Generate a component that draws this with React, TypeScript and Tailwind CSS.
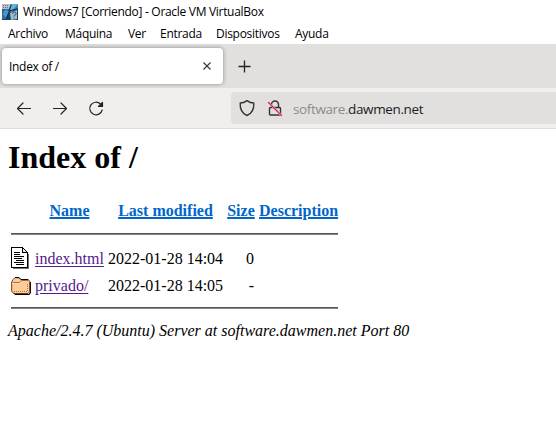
import React from "react";

const ui = "font-['Open_Sans','Noto_Sans',sans-serif]";

function VmIcon() {
  return (
    <svg width="16" height="16" viewBox="0 0 16 16" className="shrink-0">
      <rect width="16" height="16" fill="#17466b" />
      <path d="M1 5h6L4 15H0V8z" fill="#2c6fa5" />
      <path d="M7 1l9-1v4L9 8z" fill="#3680b5" />
      <path d="M10 0h6L9 8l-2-2z" fill="#64b3df" />
      <path d="M3 6l5 1-4 7-3-4z" fill="#4b98ce" />
      <path d="M8 9l7-3v9l-6 1z" fill="#a8bdca" />
      <path d="M0 0h9L7 5H0z" fill="#b9c1c7" />
      <path d="M1 1.5h5M1 3.5h5" stroke="#66727d" strokeDasharray="1 1" />
      <path d="M9 1L7 8l-3 7M7 7l8-2" stroke="#0b2941" fill="none" />
      <path d="M10.5 10q0-2 2-2t1.500 2q0 1-2 1.500v1M11.500 14h1" stroke="#245a8b" fill="none" />
    </svg>
  );
}

function FileIcon() {
  return (
    <svg width="20" height="22" viewBox="0 0 20 22" shapeRendering="crispEdges">
      <path d="M1 21h17V7h-1v14zM0 0h12v1h1v1h1v1h1v1h1v1h1v16H0z" fill="#000" />
      <path d="M17 7h1v15H2v-1h15z" fill="#777" />
      <path d="M1 1h10v5h5v14H1z" fill="#fff" />
      <path d="M12 2h1v1h1v1h1v1h-3z" fill="#eee" />
      <path d="M3 5h6v1H3zM3 7h6v1H3zM3 9h10v1H3zM3 11h8v1H3zM5 13h8v1H5zM3 15h10v1H3zM5 17h8v1H5z" fill="#000" />
    </svg>
  );
}

function FolderIcon() {
  return (
    <svg width="20" height="18" viewBox="0 0 20 18">
      <path d="M2.500 15.500l2 2H18l1.500-2V5" fill="none" stroke="#000" strokeWidth="1.200" />
      <path d="M.7 5l1.500-2.500L4 .7h4l2 2h7.500l1.200 2v10L17 16.500H3L.7 14.500z" fill="#ffcc99" stroke="#6b3c12" strokeWidth="1" />
      <path d="M2 5.500h6.500l2.500-2h6" fill="none" stroke="#9c6332" strokeWidth=".9" />
      <path d="M1.500 6.500h7l2.500-2" fill="none" stroke="#ffe3c5" strokeWidth=".7" />
      <path d="M3 14.500h14M16.500 7v8" fill="none" stroke="#ab7544" strokeDasharray="1 1" shapeRendering="crispEdges" />
      <path d="M4 .5h4l2 2h7" fill="none" stroke="#000" />
    </svg>
  );
}

function Toolbar() {
  return (
    <div className="flex h-[41px] items-center border-b border-[#dededd] bg-[#f0efee]">
      <svg width="231" height="40" viewBox="0 0 231 40" fill="none" stroke="#242424" strokeWidth="1.2" strokeLinecap="round" strokeLinejoin="round">
        <path d="M30.500 20.500H17.500M23 15l-5.500 5.500L23 26" />
        <path d="M53.500 20.500h13M61 15l5.500 5.500L61 26" />
        <path d="M100.500 16A6.300 6.300 0 1 0 102.200 22" />
        <path d="M102.500 14.500v4h-4z" fill="#242424" />
      </svg>
      <div className="flex h-8 flex-1 items-center rounded-l-[4px] bg-[#e1e0df]">
        <svg width="62" height="32" viewBox="0 0 62 32" fill="none" stroke="#343434" strokeWidth="1.4" strokeLinecap="round" strokeLinejoin="round">
          <path d="M16 8.600q3.200 2.400 6.800 2.400c.3 6-1.800 10.500-6.800 12.500-5-2-7.100-6.500-6.800-12.500q3.600 0 6.800-2.400z" />
          <path d="M40.500 15v-2.500a3.500 3.500 0 0 1 7 0V15M39.500 15.500h9q1 0 1 1v5.500q0 1-1 1h-9q-1 0-1-1v-5.500q0-1 1-1z" />
          <path d="M38 11l13 13" stroke="#e1e0df" strokeWidth="2" />
          <path d="M37.500 10.500l13 13" stroke="#ed1b4d" />
        </svg>
        <span className="pt-[2px] text-[13.5px] tracking-[-0.38px] text-[#8c8b8a]">software.<span className="text-[#1c1c1e]">dawmen.net</span></span>
      </div>
    </div>
  );
}

const row = "grid w-[330px] grid-cols-[20px_69px_115px_28px_79px] gap-x-1 items-center pl-[3px]";
const headerLink = "text-[#0066cc] underline decoration-2 underline-offset-1";

export default function App() {
  return (
    <div className={"h-[445px] w-[556px] overflow-hidden bg-white text-black " + ui}>
      <div className="flex h-6 items-center pl-[2px] text-[12px]">
        <VmIcon />
        <span className="ml-[5px] whitespace-nowrap tracking-[-0.3px]">Windows7 [Corriendo] - Oracle VM VirtualBox</span>
      </div>
      <div className="flex h-5 items-center pl-2 text-[12px] leading-5 tracking-[-0.28px] whitespace-nowrap">
        <span className="w-[57px]">Archivo</span>
        <span className="w-[63px]">Máquina</span>
        <span className="w-8">Ver</span>
        <span className="w-14">Entrada</span>
        <span className="w-[79px]">Dispositivos</span>
        <span>Ayuda</span>
      </div>
      <div className="flex h-11 items-center bg-[#e1e0df] pl-[2px]">
        <div className="flex h-9 w-[221px] items-center justify-between rounded-[4px] bg-white pr-3 pl-[7px] shadow-[0_0_4px_rgba(0,0,0,0.4)]">
          <span className="pt-[2px] text-[12px] tracking-[-0.3px]">Index of /</span>
          <svg width="8" height="8" viewBox="0 0 8 8" stroke="#333" strokeWidth="1.1"><path d="M.5.5l7 7M7.500 .5l-7 7" /></svg>
        </div>
        <svg width="13" height="13" viewBox="0 0 13 13" className="ml-[15px]" stroke="#222" strokeWidth="1.300"><path d="M6.500 .5v12M.5 6.500h12" /></svg>
      </div>
      <Toolbar />
      <main className="pl-2 font-['Liberation_Serif',serif] text-[16px] leading-[18px]">
        <h1 className="pt-[10px] text-[32px] leading-9 font-bold">Index of /</h1>
        <div className={row + " mt-[27px] h-[18px] text-center font-bold whitespace-nowrap"}>
          <span />
          <a className={headerLink}>Name</a>
          <a className={headerLink}>Last modified</a>
          <a className={headerLink}>Size</a>
          <a className={headerLink}>Description</a>
        </div>
        <div className="mt-[13px] ml-[3px] h-[2px] w-[327px] border-t border-b border-t-[#555] border-b-[#858585]" />
        <div className={row + " mt-3 h-[22px]"}>
          <FileIcon />
          <a className="pt-px text-[#551a8b] underline underline-offset-2">index.html</a>
          <span className="pt-px text-right whitespace-nowrap">2022-01-28 14:04</span>
          <span className="pt-px pr-px text-right">0</span>
        </div>
        <div className={row + " mt-2 h-[18px]"}>
          <FolderIcon />
          <a className="text-[#551a8b] underline underline-offset-2">privado/</a>
          <span className="text-right whitespace-nowrap">2022-01-28 14:05</span>
          <span className="pr-px text-right">-</span>
        </div>
        <div className="mt-3 ml-[3px] h-[2px] w-[327px] border-t border-b border-t-[#555] border-b-[#858585]" />
        <address className="mt-[13px] italic">Apache/2.4.7 (Ubuntu) Server at software.dawmen.net Port 80</address>
      </main>
    </div>
  );
}
